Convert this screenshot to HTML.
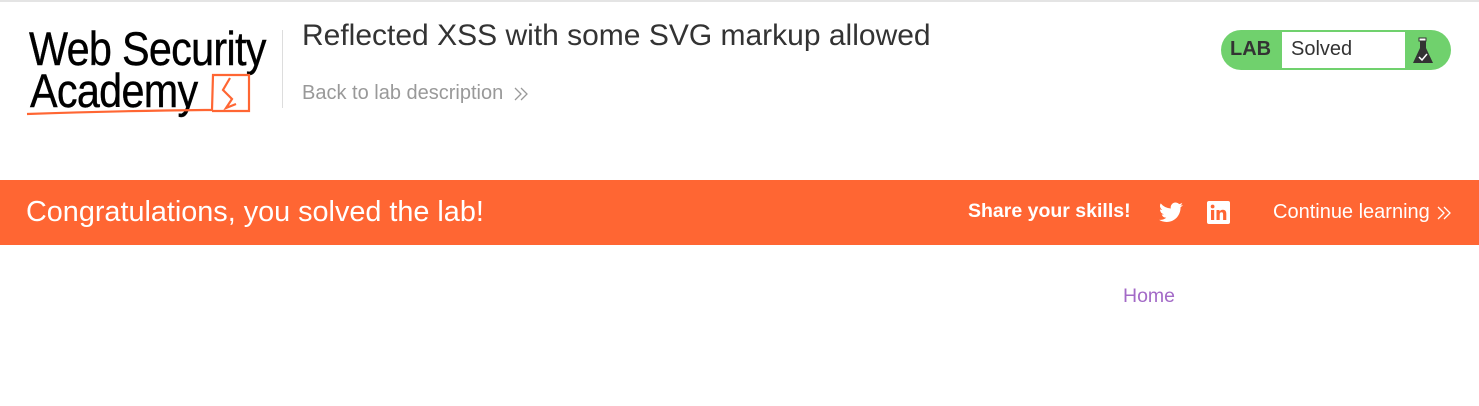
<!DOCTYPE html>
<html><head><meta charset="utf-8"><style>
*{margin:0;padding:0;box-sizing:border-box}
body{width:1479px;height:406px;background:#fff;font-family:"Liberation Sans",Arial,sans-serif;position:relative;overflow:hidden}
.a{position:absolute;white-space:nowrap}
.lg{font-size:47px;line-height:47px;letter-spacing:-0.8px;color:#000;-webkit-text-stroke:0.4px #000;transform:scaleX(0.88);transform-origin:left}
</style></head><body>
<div class="a" style="left:0;top:0;width:1479px;height:2px;background:#e4e4e4"></div>
<div class="a lg" style="left:29px;top:25px">Web Security</div>
<div class="a lg" style="left:30px;top:67px">Academy</div>
<svg class="a" style="left:0;top:0" width="290" height="130">
<path d="M27 114 Q110 111 205 110 L212 110 L213 75 L249 75 L249 111 L212 111" fill="none" stroke="#ff6633" stroke-width="2.2"/>
<path d="M230 78 L223 90 L232 99 L226 108 L236 104" fill="none" stroke="#ff6633" stroke-width="2.2"/>
</svg>
<div class="a" style="left:282px;top:30px;width:1px;height:78px;background:#ddd"></div>
<div class="a" style="left:302px;top:19px;font-size:30px;color:#333">Reflected XSS with some SVG markup allowed</div>
<div class="a" style="left:302px;top:82px;font-size:20px;color:#999">Back to lab description</div>
<svg class="a" style="left:513px;top:86px" width="16" height="16"><path d="M2 2 L8 8 L2 14 M8 2 L14 8 L8 14" fill="none" stroke="#999" stroke-width="1.3"/></svg>
<div class="a" style="left:1221px;top:30px;width:230px;height:40px;border-radius:20px;background:#70d16d"></div>
<div class="a" style="left:1282px;top:32px;width:123px;height:36px;background:#fff"></div>
<div class="a" style="left:1230px;top:38px;font-size:20px;font-weight:bold;color:#333">LAB</div>
<div class="a" style="left:1291px;top:38px;font-size:20px;color:#333">Solved</div>
<svg class="a" style="left:1410px;top:36px" width="26" height="30"><rect x="9" y="2" width="7" height="3" fill="#fff" stroke="#333" stroke-width="1"/><path d="M10 5 L10 12 L3 27 L23 27 L16 12 L16 5 Z" fill="#333"/><path d="M9 21 L12 24 L17 18" stroke="#fff" stroke-width="1.5" fill="none"/></svg>
<div class="a" style="left:0;top:180px;width:1479px;height:65px;background:#ff6633"></div>
<div class="a" style="left:26px;top:196px;font-size:28.8px;color:#fff">Congratulations, you solved the lab!</div>
<div class="a" style="left:968px;top:200px;font-size:19.5px;font-weight:bold;color:#fff">Share your skills!</div>
<svg class="a" style="left:1159px;top:202px" width="24" height="21" viewBox="0 0 24 20"><path fill="#fff" d="M24 2.4a9.8 9.8 0 0 1-2.8.8A4.9 4.9 0 0 0 23.3.4a9.9 9.9 0 0 1-3.1 1.2A4.9 4.9 0 0 0 11.8 6 14 14 0 0 1 1.7.9a4.9 4.9 0 0 0 1.5 6.6A4.9 4.9 0 0 1 1 6.9v.1a4.9 4.9 0 0 0 3.9 4.8 4.9 4.9 0 0 1-2.2.1 4.9 4.9 0 0 0 4.6 3.4A9.9 9.9 0 0 1 0 17.3 14 14 0 0 0 7.5 19.5c9 0 14-7.5 14-14v-.6A10 10 0 0 0 24 2.4z"/></svg>
<svg class="a" style="left:1207px;top:201px" width="23" height="23" viewBox="0 0 23 23"><rect width="23" height="23" rx="2" fill="#fff"/><rect x="4" y="9" width="3.2" height="10" fill="#ff6633"/><circle cx="5.6" cy="5.5" r="1.9" fill="#ff6633"/><path d="M9.5 9h3v1.5c.6-1 1.8-1.8 3.4-1.8 2.7 0 3.4 1.8 3.4 4.2V19h-3.2v-5.4c0-1.300-.3-2.3-1.6-2.3s-1.8 1-1.8 2.3V19H9.5z" fill="#ff6633"/></svg>
<div class="a" style="left:1273px;top:201px;font-size:20px;color:#fff">Continue learning</div>
<svg class="a" style="left:1436px;top:205px" width="16" height="16"><path d="M2 2 L8 8 L2 14 M8 2 L14 8 L8 14" fill="none" stroke="#fff" stroke-width="1.3"/></svg>
<div class="a" style="left:1123px;top:285px;font-size:19.5px;color:#a36ac7">Home</div>
</body></html>
